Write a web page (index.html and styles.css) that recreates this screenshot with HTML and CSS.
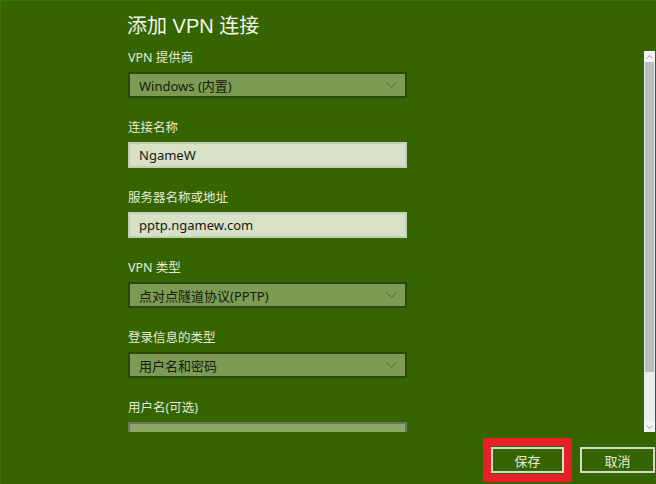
FILE: index.html
```html
<!DOCTYPE html>
<html lang="zh-CN">
<head>
<meta charset="utf-8">
<title>添加 VPN 连接</title>
<link rel="stylesheet" href="styles.css">
</head>
<body>
<div class="window">
  <div class="scroll-area">
    <div class="content">
      <h1 class="title">添加 VPN 连接</h1>
      <div class="fields">
        <div class="field">
          <div class="label">VPN 提供商</div>
          <div class="select"><span>Windows (内置)</span><svg class="chev" width="11" height="6" viewBox="0 0 11 6"><polyline points="0.5,0.5 5.5,5.5 10.5,0.5" fill="none" stroke="#52603f" stroke-width="1"/></svg></div>
        </div>
        <div class="field">
          <div class="label">连接名称</div>
          <div class="input"><span>NgameW</span></div>
        </div>
        <div class="field">
          <div class="label">服务器名称或地址</div>
          <div class="input"><span>pptp.ngamew.com</span></div>
        </div>
        <div class="field">
          <div class="label">VPN 类型</div>
          <div class="select"><span>点对点隧道协议(PPTP)</span><svg class="chev" width="11" height="6" viewBox="0 0 11 6"><polyline points="0.5,0.5 5.5,5.5 10.5,0.5" fill="none" stroke="#52603f" stroke-width="1"/></svg></div>
        </div>
        <div class="field">
          <div class="label">登录信息的类型</div>
          <div class="select"><span>用户名和密码</span><svg class="chev" width="11" height="6" viewBox="0 0 11 6"><polyline points="0.5,0.5 5.5,5.5 10.5,0.5" fill="none" stroke="#52603f" stroke-width="1"/></svg></div>
        </div>
        <div class="field">
          <div class="label">用户名(可选)</div>
          <div class="input input-hover"><span>ngamew</span></div>
        </div>
      </div>
    </div>
    <div class="scrollbar">
      <div class="sb-arrow"><svg width="7" height="4" viewBox="0 0 7 4"><polyline points="0.5,3.5 3.5,0.5 6.5,3.5" fill="none" stroke="#9a9a9a" stroke-width="1"/></svg></div>
      <div class="sb-thumb"></div>
      <div class="sb-track"></div>
      <div class="sb-arrow"><svg width="7" height="4" viewBox="0 0 7 4"><polyline points="0.5,0.5 3.5,3.5 6.5,0.5" fill="none" stroke="#9a9a9a" stroke-width="1"/></svg></div>
    </div>
  </div>
  <div class="footer">
    <div class="highlight"><button class="btn btn-save">保存</button></div>
    <button class="btn btn-cancel">取消</button>
  </div>
</div>
</body>
</html>
```
FILE: styles.css
```css
* { box-sizing: border-box; }
html, body {
  margin: 0;
  padding: 0;
  background: #356400;
}
body {
  font-family: "Noto Sans", "Noto Sans CJK SC", sans-serif;
  width: 656px;
  height: 484px;
  overflow: hidden;
}
.window {
  width: 656px;
  height: 484px;
  display: flex;
  flex-direction: column;
  border-left: 1px solid #3f7010;
  border-top: 1px solid #3f7010;
}
.scroll-area {
  height: 431px;
  display: flex;
  overflow: hidden;
  flex: none;
}
.content {
  flex: 1;
  padding: 11px 0 0 126px;
}
.title {
  margin: 0 0 9px 0;
  font-weight: normal;
  font-size: 20px;
  line-height: 28px;
  color: #f2f4ee;
  font-family: "Liberation Sans", "Noto Sans CJK SC", sans-serif;
}
.fields {
  display: flex;
  flex-direction: column;
  gap: 21px;
  width: 279px;
  margin-left: 1px;
}
.field {
  display: flex;
  flex-direction: column;
  gap: 5px;
}
.label {
  font-size: 12.5px;
  line-height: 18px;
  color: #e4ebda;
}
.select, .input {
  height: 26px;
  display: flex;
  align-items: center;
  justify-content: space-between;
  padding: 0 8px 0 9px;
  font-size: 13px;
  color: #161b10;
}
.select {
  background: #7b9c52;
  border: 2px solid #2b4812;
}
.chev {
  flex: none;
}
.input {
  background: #d7e1c7;
  border: 2px solid #c3cfb2;
}
.input-hover {
  background: #8aa761;
  border: 2px solid #6c7568;
}
.scrollbar {
  flex: none;
  width: 11px;
  margin: 50px 1px 0 0;
  display: flex;
  flex-direction: column;
  background: #ececec;
}
.sb-arrow {
  height: 11px;
  background: #f3f3f3;
  display: flex;
  align-items: center;
  justify-content: center;
  flex: none;
}
.sb-thumb {
  height: 310px;
  background: #bdbdbd;
  margin: 0 1px;
  flex: none;
}
.sb-track {
  flex: 1;
  background: #ececec;
}
.footer {
  flex: 1;
  display: flex;
  justify-content: flex-end;
  align-items: flex-start;
  gap: 8px;
  padding: 6px 1px 0 0;
}
.highlight {
  border: 8px solid #e8202a;
  padding: 1px 0;
}
.btn {
  height: 26px;
  background: #356400;
  border: 2px solid #d3dcc6;
  color: #e4ebda;
  font-family: "Noto Sans", "Noto Sans CJK SC", sans-serif;
  font-size: 13px;
  padding: 0;
  display: flex;
  align-items: center;
  justify-content: center;
}
.btn-save { width: 73px; }
.btn-cancel { width: 75px; margin-top: 9px; }
```
